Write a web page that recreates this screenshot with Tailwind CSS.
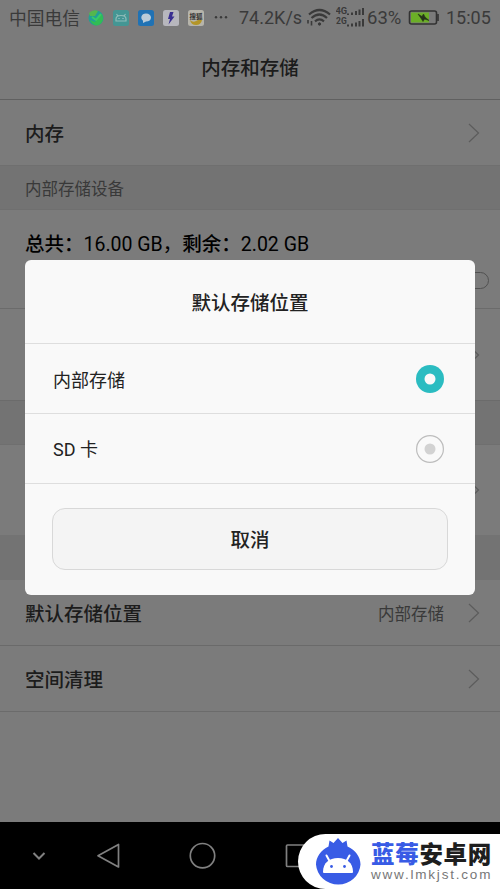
<!DOCTYPE html>
<html lang="zh-CN">
<head>
<meta charset="utf-8">
<title>内存和存储</title>
<script src="https://cdn.jsdelivr.net/npm/@tailwindcss/browser@4"></script>
</head>
<body class="m-0">
<svg class="hidden">
  <symbol id="chev" viewBox="0 0 12 20"><path d="M1 1 L10.5 10 L1 19" fill="none" stroke="#5c5c5c" stroke-width="1.2"/></symbol>
</svg>
<div class="relative flex h-[889px] w-[500px] flex-col overflow-hidden bg-[#7b7b7b] font-['Roboto','Noto_Sans_CJK_SC',sans-serif] text-[19.5px] leading-none text-[#1c1c1c]">
  <header class="flex h-[35px] shrink-0 items-center pl-[9px] text-[#3a3a3a]">
    <span class="w-[79px] pt-[2px] text-[17.8px] whitespace-nowrap">中国电信</span>
    <div class="flex w-[150px] items-center gap-[9px]">
      <svg class="size-4" viewBox="0 0 16 16"><circle cx="8" cy="8" r="7.5" fill="#229f95"/><path d="M1 3Q5-1 10 1L7 6L2 6Z" fill="#55b64d"/><path d="M2 10L7 12L14 4Q17 11 11 15Q5 17 2 10" fill="#31bd54"/><path d="M4 7L8 10L13 4" fill="none" stroke="#37cb67" stroke-width="2"/></svg>
      <svg class="size-4" viewBox="0 0 16 16"><rect width="16" height="16" rx="2.5" fill="#449694"/><path d="M3 11V9Q3 5.5 8 5.5T13 9V11ZM5 6L3.5 4M11 6L12.5 4" fill="none" stroke="#8fbcb9" stroke-width="1.2"/><path d="M5.5 8.5H6.5M9.5 8.5H10.5" stroke="#acd"/></svg>
      <svg class="size-4" viewBox="0 0 16 16"><rect width="16" height="16" rx="2.5" fill="#2072b4"/><path d="M8 3.5C11 3.5 13 5.2 13 7.6S11 11.6 8 11.6L5 13V10.8C2 8.5 3 3.5 8 3.5" fill="#b9cbd9"/></svg>
      <svg class="size-4" viewBox="0 0 16 16"><rect width="16" height="16" rx="2.5" fill="#b7b7bd"/><path d="M7 2H10.5L9 6.5H11.5L5.5 14.5L7 9H5Z" fill="#392e91"/></svg>
      <svg class="size-4" viewBox="0 0 16 16"><rect width="16" height="16" rx="2.5" fill="#b6b4ab"/><path d="M2 10Q5 13 8 11T14 10Q13 15 8 15T2 10" fill="#b39528"/><text x="1.5" y="8.5" font-size="6.5" font-weight="700" fill="#333">搜狐</text></svg>
      <svg class="h-4 w-4" viewBox="0 0 16 16" fill="#3a3a3a"><circle cx="3" cy="7.3" r="1.2"/><circle cx="8" cy="7.3" r="1.2"/><circle cx="13" cy="7.3" r="1.2"/></svg>
    </div>
    <span class="w-[68px] pl-px text-[18px] whitespace-nowrap">74.2K/s</span>
    <svg class="h-5 w-[27px] shrink-0" viewBox="0 0 27 20" fill="none" stroke="#3a3a3a" stroke-width="2.2"><path d="M3 6.500Q13.500 -2.500 24 6.500M5.500 10Q13.500 3 21 10M9 13.300Q13.500 9.500 18 13.300"/><circle cx="13.500" cy="16" r="1.200" fill="#3a3a3a" stroke-width="1"/><path d="M2 12V15.500M5.500 13V17.500" stroke-width="1.600"/></svg>
    <svg class="ml-[3px] h-6 w-[30px] shrink-0" viewBox="0 0 30 24" fill="#3a3a3a"><text x="-0.500" y="7.500" font-size="9.300" font-weight="700">4G</text><text x="0" y="18" font-size="8.500" font-weight="700">2G</text><path d="M11 7.500h2v1.500h-2zM15 6.500h2v2.500h-2zM19 5h2v4h-2zM22.500 3.500h2v5.500h-2zM26 2h2v7h-2zM11 18.500h2v2h-2zM15 17.500h2v3h-2zM19 16.500h2v4h-2zM22.500 15h2v5.500h-2zM26 13h2v7.500h-2z"/></svg>
    <span class="w-[42px] pt-px pl-px text-[18.500px]">63%</span>
    <svg class="h-4 w-[31px] shrink-0" viewBox="0 0 31 16"><rect x="1.500" y="1" width="27" height="13" rx="2" fill="none" stroke="#333" stroke-width="1.600"/><rect x="3" y="2.500" width="18" height="10" fill="#6bae27"/><path d="M30 4V11" stroke="#333" stroke-width="1.600"/><path d="M10 4L14 6.500L15.500 4L17 7L21 10.500L16.500 9L15 11.500L13.500 9Z" fill="#25331a" stroke="#25331a" stroke-width=".6"/></svg>
    <span class="pl-[7px] text-[18px]">15:05</span>
  </header>
  <h1 class="flex h-[65px] shrink-0 items-center justify-center border-b border-[#606060] pt-1 font-medium">内存和存储</h1>
  <main class="flex flex-col">
    <div class="flex h-[66px] items-center justify-between border-b border-[#6f6f6f] pr-5 pl-[25px] font-medium"><span class="pt-1">内存</span><svg class="h-5 w-3"><use href="#chev"/></svg></div>
    <div class="flex h-[44px] items-center border-b border-[#6f6f6f] bg-[#737373] pt-[5px] pl-[25px] text-[16.5px] text-[#393939]">内部存储设备</div>
    <div class="flex h-[99px] flex-col border-b border-[#6b6b6b] pt-[25px] pl-[25px] text-black">
      <p class="whitespace-nowrap"><span class="font-medium">总共：</span>16.00 GB，<span class="font-medium">剩余：</span>2.02 GB</p>
      <div class="mt-[17px] mr-[11px] h-[17px] w-10 self-end rounded-full border-[1.5px] border-[#515151]"></div>
    </div>
    <div class="flex h-[92px] items-center justify-end border-b border-[#6b6b6b] pr-5"><svg class="h-5 w-3"><use href="#chev"/></svg></div>
    <div class="h-[44px] border-b border-[#6f6f6f] bg-[#737373]"></div>
    <div class="flex h-[90px] items-center justify-end pr-5"><svg class="h-5 w-3"><use href="#chev"/></svg></div>
    <div class="h-[45px] bg-[#737373]"></div>
    <div class="flex h-[66px] items-center border-b border-[#6a6a6a] pr-5 pl-[25px] font-medium"><span class="flex-1 pt-1">默认存储位置</span><span class="mr-6 pt-[5px] text-[16.5px] font-normal text-[#393939]">内部存储</span><svg class="h-5 w-3"><use href="#chev"/></svg></div>
    <div class="flex h-[66px] items-center justify-between border-b border-[#6b6b6b] pr-5 pl-[25px] font-medium"><span class="pt-1">空间清理</span><svg class="h-5 w-3"><use href="#chev"/></svg></div>
  </main>
  <nav class="mt-auto flex h-[67px] shrink-0 items-center bg-black">
    <svg class="h-[67px] w-full" viewBox="0 0 500 67" fill="none" stroke="#808080" stroke-width="1.700"><path d="M33.500 31L39 36.500L44.500 31" stroke-width="2"/><path d="M118.500 22.500V45L98 33.700Z" stroke-linejoin="round"/><circle cx="202.500" cy="33.700" r="12.200"/><rect x="286.500" y="23" width="22" height="21.500" rx="1"/></svg>
  </nav>

  <section class="absolute top-[260px] left-[25px] flex h-[335px] w-[450px] flex-col rounded-md bg-[#f9f9f9] text-[#222]">
    <h2 class="flex h-[84px] items-center justify-center border-b border-[#dedede] pt-1 font-medium">默认存储位置</h2>
    <div class="flex h-[70px] items-center justify-between border-b border-[#dedede] pr-[31px] pl-7 text-[18px]"><span class="pt-1">内部存储</span><svg class="size-7" viewBox="0 0 28 28"><circle cx="14" cy="14" r="14" fill="#2bbcc1"/><circle cx="14" cy="14" r="5.500" fill="#f9f9f9"/></svg></div>
    <div class="flex h-[70px] items-center justify-between border-b border-[#dedede] pr-[31px] pl-7 text-[18px]"><span class="pt-[2px]">SD 卡</span><svg class="size-7" viewBox="0 0 28 28"><circle cx="14" cy="14" r="13.400" fill="none" stroke="#bdbdbd" stroke-width="1.200"/><circle cx="14" cy="14" r="5.500" fill="#d2d2d2"/></svg></div>
    <button class="mt-[24px] mb-[25px] ml-[27px] flex w-[396px] flex-1 items-center justify-center rounded-[13px] border border-[#d8d8d8] bg-[#f4f4f4] pt-1 font-medium">取消</button>
  </section>

  <aside class="absolute right-0 bottom-0 flex h-[55px] w-[202px] items-center rounded-l-full bg-white">
    <svg class="ml-[17px] h-[50px] w-[46px] shrink-0" viewBox="0 0 46 50"><path d="M23 1L18.500 6L14.500 3.500L13.500 9.500C6 13 1 20 1 27.500A22.300 21.500 0 0 0 45.500 27.500C45.500 20 40.500 13 32.500 9.500L31.500 3.500L27.500 6Z" fill="#385be5"/><path d="M8 35C8 26 14 21 23 21S38 26 38 35Q38 36 37 36H9Q8 36 8 35Z" fill="#fff"/><path d="M14.500 24L11.500 18.500M31.500 24L34.500 18.500" stroke="#fff" stroke-width="2" stroke-linecap="round"/><circle cx="16.500" cy="29.500" r="1.400" fill="#385be5"/><circle cx="29.500" cy="29.500" r="1.400" fill="#385be5"/></svg>
    <div class="ml-[10px] flex flex-col gap-[3px] whitespace-nowrap">
      <div class="font-['Noto_Sans_CJK_SC',sans-serif] text-[23.500px] leading-[24px] font-black tracking-[0.700px] text-[#1e1e1e]"><span class="text-[#385be5]">蓝莓</span>安卓网</div>
      <div class="font-['Liberation_Sans',sans-serif] text-[13.500px] leading-[14px] tracking-[1.800px] text-[#777]">www.lmkjst.com</div>
    </div>
  </aside>
</div>
</body>
</html>
